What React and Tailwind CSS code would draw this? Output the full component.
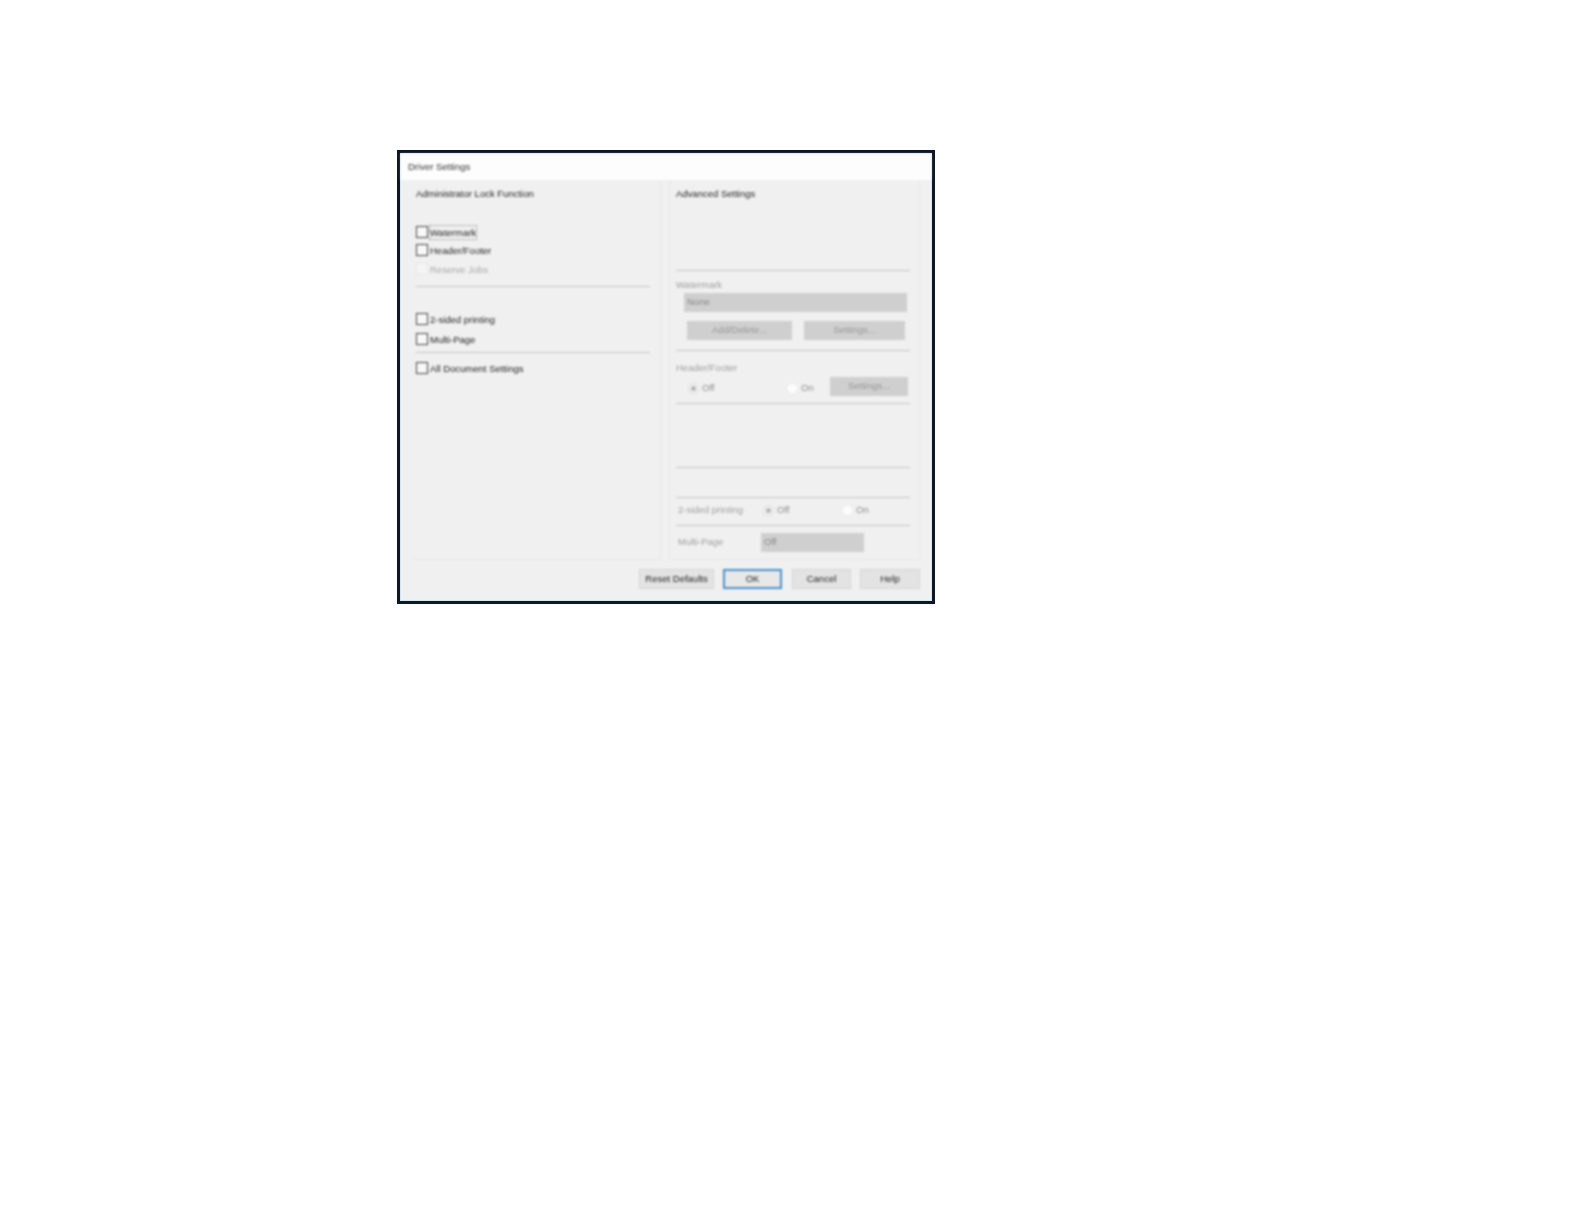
import React from 'react'

function Check({ label, disabled, focused, className }) {
    return (
        <div className={`flex items-center h-[18px] ${className || ''}`}>
            <span className={`w-3 h-3 border ${disabled ? 'border-[#e8e8e8] bg-[#f4f4f4]' : 'border-[#444] bg-[#f8f8f8]'}`}></span>
            <span className={`ml-[2px] text-[9.5px] leading-[13px] ${disabled ? 'text-[#a8a8a8]' : 'text-[#222]'} ${focused ? 'outline outline-dotted outline-[#888]' : ''}`}>{label}</span>
        </div>
    )
}

function Divider({ className }) {
    return <div className={`h-px bg-[#c4c4c4] ${className || ''}`}></div>
}

function Radio({ label, on, className }) {
    return (
        <div className={`flex items-center gap-[3px] ${className || ''}`}>
            <span className={`w-[11px] h-[11px] rounded-full flex items-center justify-center ${on ? 'bg-[#f0f0f0] border border-[#dcdcdc]' : 'bg-[#fcfcfc] border border-[#efefef]'}`}>
                {on && <span className="w-[5px] h-[5px] rounded-full bg-[#b5b5b5]"></span>}
            </span>
            <span className="text-[9.5px] text-[#8c8c8c]">{label}</span>
        </div>
    )
}

function GrayButton({ label, className }) {
    return (
        <div className={`h-[19px] bg-[#cfcfcf] flex items-center justify-center text-[9.5px] text-[#979797] ${className || ''}`}>{label}</div>
    )
}

function DialogButton({ label, primary, className }) {
    return (
        <div className={`h-[20px] flex items-center justify-center text-[9.5px] text-[#222] ${primary ? 'border-2 border-[#4a90c8] bg-[#e8e8e8]' : 'border border-[#d6d6d6] bg-[#e3e3e3]'} ${className || ''}`}>{label}</div>
    )
}

export default function App() {
    return (
        <div className="min-h-[1224px] bg-white pt-[150px] pl-[397px] font-['Liberation_Sans',sans-serif]">
            <div className="w-[538px] h-[454px] border-[3px] border-[#0d1726]">
                <div className="h-full border border-[#d3e6f2] bg-[#f0f0f0]">
                    <div className="h-full flex flex-col blur-[0.8px]">
                        <div className="h-[26px] bg-[#fdfdfd] flex items-center pl-[7px] text-[9.5px] text-[#333]">Driver Settings</div>

                        <div className="flex h-[380px] ml-[12px] gap-2">
                            <div className="w-[248px] pl-[3px] pr-[10px] border-r border-b border-[#e6e6e6]">
                                <div className="h-[26px] pt-[2px] flex items-center text-[9.5px] text-[#222]">Administrator Lock Function</div>
                                <Check label="Watermark" focused className="mt-[17px]" />
                                <Check label="Header/Footer" />
                                <Check label="Reserve Jobs" disabled className="mt-px" />
                                <Divider className="mt-[8px]" />
                                <Check label="2-sided printing" className="mt-[23px]" />
                                <Check label="Multi-Page" className="mt-[2px]" />
                                <Divider className="mt-[4px]" />
                                <Check label="All Document Settings" className="mt-[6px]" />
                            </div>

                            <div className="w-[251px] pl-[6px] pr-[9px] border-l border-r border-b border-[#e8e8e8]">
                                <div className="h-[26px] pt-[2px] flex items-center text-[9.5px] text-[#222]">Advanced Settings</div>
                                <Divider className="mt-[64px]" />
                                <div className="h-[14px] pt-[2px] mt-[6px] flex items-center text-[9.5px] text-[#9e9e9e]">Watermark</div>
                                <div className="h-[19px] w-[223px] mt-[2px] ml-2 bg-[#cfcfcf] flex items-center pl-[3px] text-[9.5px] text-[#888]">None</div>
                                <div className="flex mt-[9px] ml-[11px] gap-3">
                                    <GrayButton label="Add/Delete..." className="w-[105px]" />
                                    <GrayButton label="Settings..." className="w-[101px]" />
                                </div>
                                <Divider className="mt-[10px]" />
                                <div className="h-[14px] pt-[2px] mt-[9px] flex items-center text-[9.5px] text-[#9e9e9e]">Header/Footer</div>
                                <div className="flex items-center mt-[3px] h-[19px]">
                                    <Radio label="Off" on className="ml-[12px] w-[99px] pt-[3px]" />
                                    <Radio label="On" className="w-[43px] pt-[3px]" />
                                    <GrayButton label="Settings..." className="w-[78px]" />
                                </div>
                                <Divider className="mt-[7px]" />
                                <Divider className="mt-[63px]" />
                                <Divider className="mt-[29px]" />
                                <div className="flex items-center h-[14px] mt-[5px] ml-[2px]">
                                    <span className="w-[85px] text-[9.5px] text-[#9e9e9e]">2-sided printing</span>
                                    <Radio label="Off" on className="w-[79px]" />
                                    <Radio label="On" />
                                </div>
                                <Divider className="mt-[8px]" />
                                <div className="flex items-center h-[19px] mt-[7px] ml-[2px]">
                                    <span className="w-[83px] text-[9.5px] text-[#9e9e9e]">Multi-Page</span>
                                    <div className="w-[103px] h-[19px] bg-[#cfcfcf] flex items-center pl-[3px] text-[9.5px] text-[#888]">Off</div>
                                </div>
                            </div>
                        </div>

                        <div className="flex justify-end gap-2 mt-[9px] pr-[11px]">
                            <DialogButton label="Reset Defaults" className="w-[75px] mr-px" />
                            <DialogButton label="OK" primary className="w-[59px]" />
                            <DialogButton label="Cancel" className="w-[59px] ml-[2px]" />
                            <DialogButton label="Help" className="w-[60px] ml-px" />
                        </div>
                    </div>
                </div>
            </div>
        </div>
    )
}
